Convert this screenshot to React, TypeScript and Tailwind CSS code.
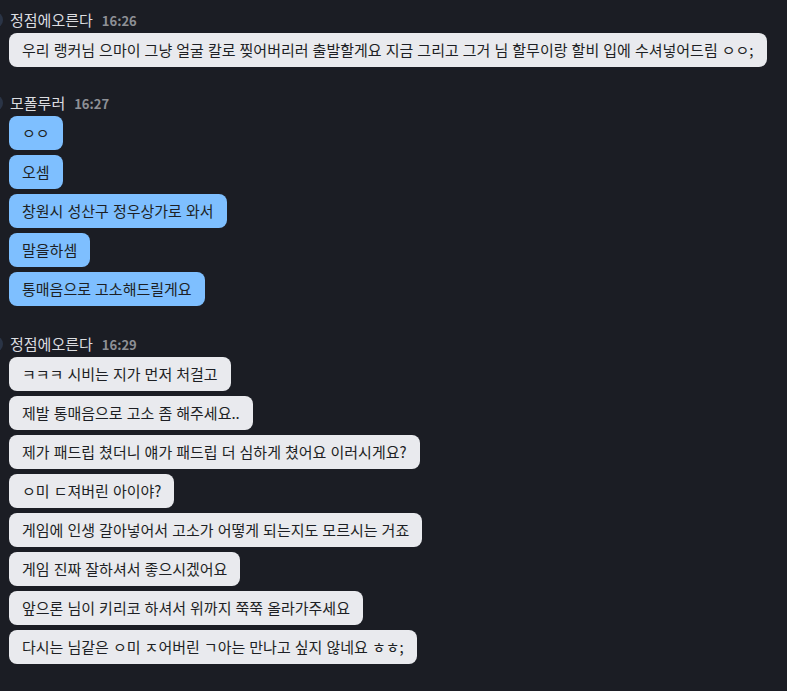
import React from "react";

type Group = { name: string; time: string; mine: boolean; msgs: string[]; mt: string };

const groups: Group[] = [
  {
    name: "정점에오른다",
    time: "16:26",
    mine: false,
    mt: "mt-0",
    msgs: [
      "우리 랭커님 으마이 그냥 얼굴 칼로 찢어버리러 출발할게요 지금 그리고 그거 님 할무이랑 할비 입에 수셔넣어드림 ㅇㅇ;",
    ],
  },
  {
    name: "모폴루러",
    time: "16:27",
    mine: true,
    mt: "mt-[27px]",
    msgs: ["ㅇㅇ", "오셈", "창원시 성산구 정우상가로 와서", "말을하셈", "통매음으로 고소해드릴게요"],
  },
  {
    name: "정점에오른다",
    time: "16:29",
    mine: false,
    mt: "mt-[29px]",
    msgs: [
      "ㅋㅋㅋ 시비는 지가 먼저 처걸고",
      "제발 통매음으로 고소 좀 해주세요..",
      "제가 패드립 쳤더니 얘가 패드립 더 심하게 쳤어요 이러시게요?",
      "ㅇ미 ㄷ져버린 아이야?",
      "게임에 인생 갈아넣어서 고소가 어떻게 되는지도 모르시는 거죠",
      "게임 진짜 잘하셔서 좋으시겠어요",
      "앞으론 님이 키리코 하셔서 위까지 쭉쭉 올라가주세요",
      "다시는 님같은 ㅇ미 ㅈ어버린 ㄱ아는 만나고 싶지 않네요 ㅎㅎ;",
    ],
  },
];

export default function App() {
  return (
    <div
      className="w-[787px] h-[691px] bg-[#1b1d24] overflow-hidden pt-[11px] pl-[9px] flex flex-col"
      style={{ fontFamily: '"Noto Sans CJK KR", "Noto Sans", sans-serif' }}
    >
      {groups.map((g, i) => (
        <div key={i} className={`relative flex flex-col items-start ${g.mt}`}>
          <div className="absolute left-[-22px] top-[1px] w-[16px] h-[16px] rounded-full bg-[#2a3446]" />
          <div className="flex items-baseline gap-[9px] h-[18px] mb-[4px] pl-[1px]">
            <span className="text-[15px] leading-[18px] text-[#dcdde0]">{g.name}</span>
            <span className="text-[13px] leading-[18px] font-semibold text-[#8e9096]">{g.time}</span>
          </div>
          <div className="flex flex-col items-start gap-[5px]">
            {g.msgs.map((m, j) => (
              <div
                key={j}
                className={`h-[34px] shrink-0 flex items-center px-[13px] rounded-[8px] text-[15px] [word-spacing:0.7px] text-[#1d1f24] whitespace-nowrap ${
                  g.mine ? "bg-[#7ebfff]" : "bg-[#e9eaee]"
                }`}
              >
                {m}
              </div>
            ))}
          </div>
        </div>
      ))}
    </div>
  );
}
